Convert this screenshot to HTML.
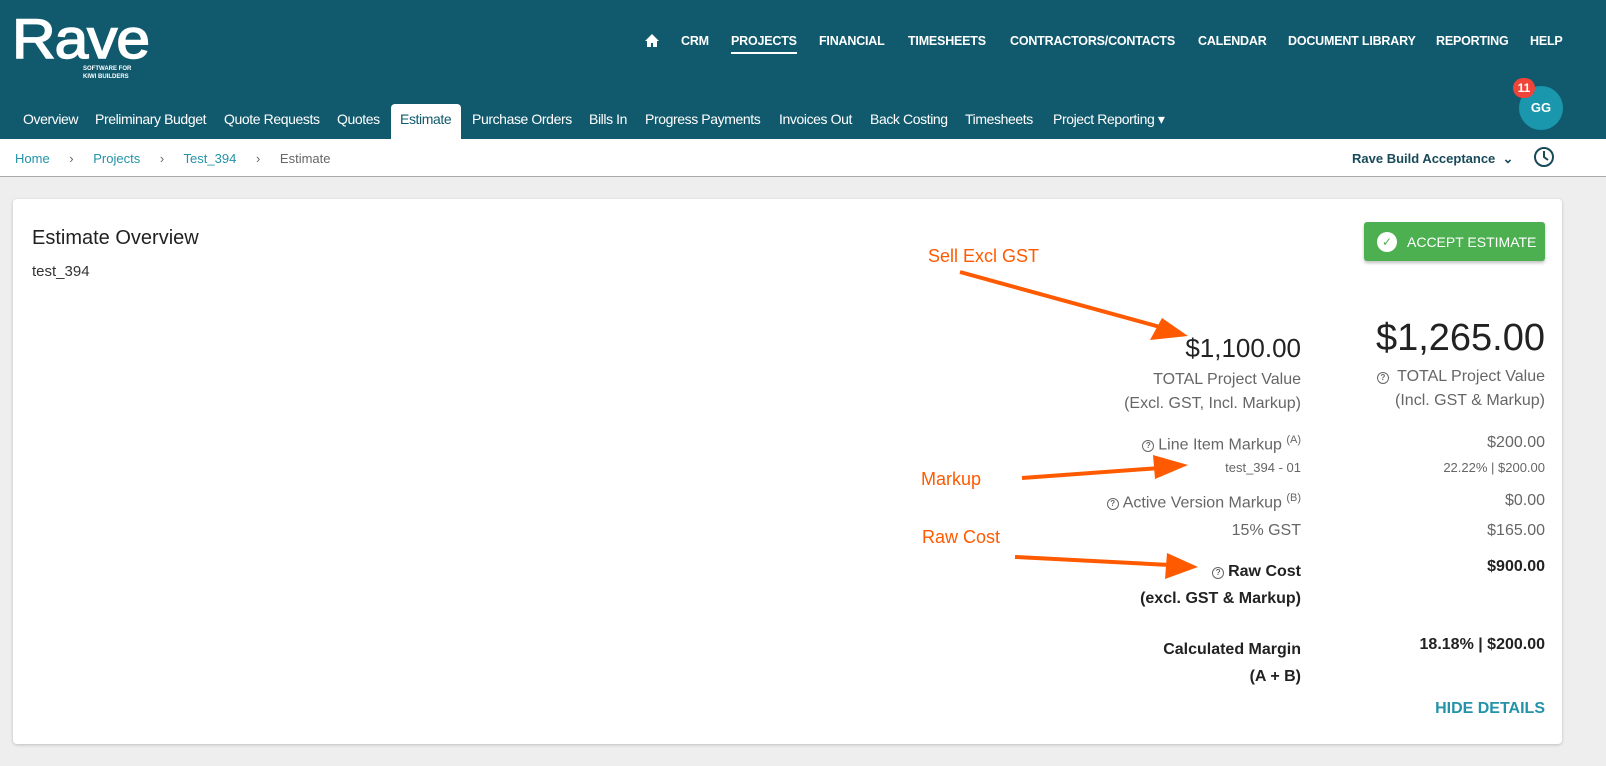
<!DOCTYPE html>
<html><head><meta charset="utf-8"><style>
*{margin:0;padding:0;box-sizing:border-box}
body{width:1606px;height:766px;background:#eeeeee;font-family:"Liberation Sans",Arial,sans-serif;position:relative;overflow:hidden}
.a{position:absolute;white-space:nowrap}
.hdr{position:absolute;left:0;top:0;width:1606px;height:139px;background:#115a6e}
.nav{font-size:12.5px;font-weight:bold;color:#fff;top:34px;letter-spacing:-0.2px}
.tab{font-size:14px;color:#fff;top:111px;letter-spacing:-0.4px}
.r1{right:305px;text-align:right}
.r2{right:61px;text-align:right}
.g{color:#666}
.q{display:inline-block;width:12px;height:12px;border:1.3px solid #666;border-radius:50%;font-size:8px;line-height:10px;text-align:center;vertical-align:1px;margin-right:4px;font-weight:bold}
.or{color:#ff5a00;font-size:18px}
</style></head><body>
<div class="hdr"></div>
<div class="a" style="left:12px;top:6px;font-size:56px;color:#fff;letter-spacing:-1px;transform:scaleX(1.08);transform-origin:left;-webkit-text-stroke:1.5px #fff">Rave</div>
<div class="a" style="left:83px;top:65px;font-size:6px;font-weight:bold;color:#fff;line-height:8px">SOFTWARE FOR<br>KIWI BUILDERS</div>
<svg class="a" style="left:644px;top:33px" width="16" height="15" viewBox="0 0 16 15"><path d="M8 1L1 8h2v6h4v-4h2v4h4V8h2z" fill="#fff"/></svg>
<div class="a nav" style="left:681px">CRM</div>
<div class="a nav" style="left:731px">PROJECTS</div>
<div class="a" style="left:731px;top:52px;width:66px;height:2px;background:#fff"></div>
<div class="a nav" style="left:819px">FINANCIAL</div>
<div class="a nav" style="left:908px">TIMESHEETS</div>
<div class="a nav" style="left:1010px">CONTRACTORS/CONTACTS</div>
<div class="a nav" style="left:1198px">CALENDAR</div>
<div class="a nav" style="left:1288px">DOCUMENT LIBRARY</div>
<div class="a nav" style="left:1436px">REPORTING</div>
<div class="a nav" style="left:1530px">HELP</div>
<div class="a" style="left:391px;top:104px;width:70px;height:35px;background:#fff;border-radius:4px 4px 0 0"></div>
<div class="a tab" style="left:23px">Overview</div>
<div class="a tab" style="left:95px">Preliminary Budget</div>
<div class="a tab" style="left:224px">Quote Requests</div>
<div class="a tab" style="left:337px">Quotes</div>
<div class="a tab" style="left:400px;color:#115a6e">Estimate</div>
<div class="a tab" style="left:472px">Purchase Orders</div>
<div class="a tab" style="left:589px">Bills In</div>
<div class="a tab" style="left:645px">Progress Payments</div>
<div class="a tab" style="left:779px">Invoices Out</div>
<div class="a tab" style="left:870px">Back Costing</div>
<div class="a tab" style="left:965px">Timesheets</div>
<div class="a tab" style="left:1053px">Project Reporting ▾</div>
<div class="a" style="left:1519px;top:86px;width:44px;height:44px;border-radius:50%;background:#1a97ad;color:#fff;font-weight:bold;font-size:13px;line-height:44px;text-align:center">GG</div>
<div class="a" style="left:1513px;top:78px;width:22px;height:20px;border-radius:10px;background:#f04438;color:#fff;font-weight:bold;font-size:12px;line-height:20px;text-align:center">11</div>
<div class="a" style="left:0;top:139px;width:1606px;height:38px;background:#fff;border-bottom:1.5px solid #aaa"></div>
<div class="a" style="left:15px;top:151px;font-size:13px;color:#2293a8">Home <span style="color:#666;margin:0 16px">›</span> Projects <span style="color:#666;margin:0 16px">›</span> Test_394 <span style="color:#666;margin:0 16px">›</span> <span style="color:#666">Estimate</span></div>
<div class="a" style="left:1352px;top:151px;font-size:13px;font-weight:bold;color:#184a5a">Rave Build Acceptance &nbsp;⌄</div>
<svg class="a" style="left:1533px;top:146px" width="22" height="22" viewBox="0 0 22 22"><circle cx="11" cy="11" r="9" fill="none" stroke="#184a5a" stroke-width="2"/><path d="M11 5v6l4 3" fill="none" stroke="#184a5a" stroke-width="2"/></svg>
<div class="a" style="left:13px;top:199px;width:1549px;height:545px;background:#fff;border-radius:4px;box-shadow:0 1px 3px rgba(0,0,0,.2)"></div>
<div class="a" style="left:32px;top:227px;font-size:20px;color:#222">Estimate Overview</div>
<div class="a" style="left:32px;top:263px;font-size:15px;color:#333">test_394</div>
<div class="a" style="left:1364px;top:222px;width:181px;height:39px;background:#4caf50;border-radius:3px;box-shadow:0 2px 3px rgba(0,0,0,.25);color:#fff;font-size:14px;display:flex;align-items:center"><span style="display:inline-block;width:20px;height:20px;border-radius:50%;background:#fff;color:#4caf50;text-align:center;line-height:20px;font-size:12px;margin:0 10px 0 13px">✓</span>ACCEPT ESTIMATE</div>
<div class="a r1" style="top:333px;font-size:26px;color:#222">$1,100.00</div>
<div class="a r2" style="top:317px;font-size:38px;color:#222">$1,265.00</div>
<div class="a r1 g" style="top:368px;font-size:16px;line-height:24px">TOTAL Project Value<br>(Excl. GST, Incl. Markup)</div>
<div class="a r2 g" style="top:365px;font-size:16px;line-height:24px"><span class="q">?</span> TOTAL Project Value<br>(Incl. GST &amp; Markup)</div>
<div class="a r1 g" style="top:434px;font-size:16px"><span class="q">?</span>Line Item Markup <sup style="font-size:11px">(A)</sup></div>
<div class="a r2 g" style="top:434px;font-size:16px">$200.00</div>
<div class="a r1 g" style="top:460px;font-size:13px">test_394 - 01</div>
<div class="a r2 g" style="top:460px;font-size:13px">22.22% | $200.00</div>
<div class="a r1 g" style="top:492px;font-size:16px"><span class="q">?</span>Active Version Markup <sup style="font-size:11px">(B)</sup></div>
<div class="a r2 g" style="top:492px;font-size:16px">$0.00</div>
<div class="a r1 g" style="top:522px;font-size:16px">15% GST</div>
<div class="a r2 g" style="top:522px;font-size:16px">$165.00</div>
<div class="a r1" style="top:558px;font-size:16px;line-height:27px;color:#222;font-weight:bold"><span class="q" style="font-weight:normal">?</span>Raw Cost<br>(excl. GST &amp; Markup)</div>
<div class="a r2" style="top:558px;font-size:16px;color:#222;font-weight:bold">$900.00</div>
<div class="a r1" style="top:636px;font-size:16px;line-height:27px;color:#222;font-weight:bold">Calculated Margin<br>(A + B)</div>
<div class="a r2" style="top:636px;font-size:16px;color:#222;font-weight:bold">18.18% | $200.00</div>
<div class="a r2" style="top:700px;font-size:16px;color:#2293a8;font-weight:bold">HIDE DETAILS</div>
<div class="a or" style="left:928px;top:246px">Sell Excl GST</div>
<div class="a or" style="left:921px;top:469px">Markup</div>
<div class="a or" style="left:922px;top:527px">Raw Cost</div>
<svg class="a" style="left:0;top:0" width="1606" height="766">
<g fill="#ff5a00" stroke="#ff5a00">
<line x1="960" y1="272" x2="1160" y2="327" stroke-width="4"/><polygon points="1188,336 1150,340 1162,318" stroke="none"/>
<line x1="1022" y1="478" x2="1160" y2="468" stroke-width="4"/><polygon points="1188,465 1155,479 1153,455" stroke="none"/>
<line x1="1015" y1="557" x2="1170" y2="565" stroke-width="4"/><polygon points="1198,567 1165,579 1167,553" stroke="none"/>
</g></svg>
</body></html>
